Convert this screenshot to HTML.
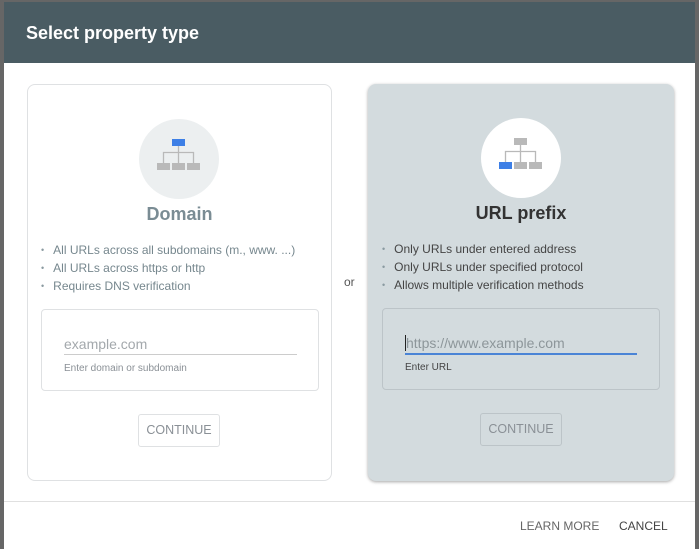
<!DOCTYPE html>
<html><head><style>
*{margin:0;padding:0;box-sizing:border-box}
body{width:699px;height:549px;background:#666;position:relative;overflow:hidden;font-family:"Liberation Sans",sans-serif}
.dlg{position:absolute;left:4px;top:2px;width:691px;height:547px;background:#fff}
.hdr{position:absolute;left:0;top:0;width:691px;height:61px;background:#4a5c63;color:#fff;font-weight:bold;font-size:18px;padding:21px 0 0 22px}
.a{position:absolute}
.card{position:absolute;top:84px;height:397px;border-radius:8px}
.c1{left:27px;width:305px;border:1px solid #dfe1e3;background:#fff}
.c2{left:368px;width:306px;background:#d3dbde;box-shadow:0 1px 3px rgba(0,0,0,.35)}
.circ{position:absolute;width:80px;height:80px;border-radius:50%;top:34px}
.ttl{position:absolute;top:119px;width:100%;text-align:center;font-size:18px;font-weight:bold}
ul{position:absolute;left:13px;top:156px;font-size:12px;line-height:18px;list-style:none}
li:before{content:"•";font-size:9px;margin-right:9px;vertical-align:1px;color:#8a9aa0}
.inp{position:absolute;top:224px;left:13px;width:278px;height:82px;border-radius:4px}
.btn{position:absolute;top:329px;width:82px;height:33px;border-radius:3px;font-size:12.5px;text-align:center;line-height:31px;color:#8a9096}
</style></head><body>
<div class="dlg">
<div class="hdr">Select property type</div>
</div>
<div class="card c1">
 <div class="circ" style="left:111px;background:#eceff0"></div>
 <svg class="a" style="left:0;top:0" width="305" height="120">
  <rect x="144" y="54" width="13" height="7" fill="#3d7fe6"/>
  <path d="M150.5 61v6M135.5 78v-10.5h30v10.5M150.5 67v11" stroke="#b9b9b9" stroke-width="1.3" fill="none"/>
  <rect x="129" y="78" width="13" height="7" fill="#b9b9b9"/>
  <rect x="144" y="78" width="13" height="7" fill="#b9b9b9"/>
  <rect x="159" y="78" width="13" height="7" fill="#b9b9b9"/>
 </svg>
 <div class="ttl" style="color:#7a8c94">Domain</div>
 <ul style="color:#76878e"><li>All URLs across all subdomains (m., www. ...)</li><li>All URLs across https or http</li><li>Requires DNS verification</li></ul>
 <div class="inp" style="border:1px solid #dfe1e3">
  <div class="a" style="left:22px;top:26px;font-size:14px;color:#a3a8ac">example.com</div>
  <div class="a" style="left:22px;top:44px;width:233px;height:1px;background:#ccc"></div>
  <div class="a" style="left:22px;top:53px;font-size:10px;color:#8a9096">Enter domain or subdomain</div>
 </div>
 <div class="btn" style="left:110px;border:1px solid #dfe1e3">CONTINUE</div>
</div>
<div class="a" style="left:344px;top:275px;font-size:12px;color:#555">or</div>
<div class="card c2">
 <div class="circ" style="left:113px;background:#fff"></div>
 <svg class="a" style="left:0;top:0" width="306" height="120">
  <rect x="146" y="54" width="13" height="7" fill="#b9b9b9"/>
  <path d="M152.5 61v6M137.5 78v-10.5h30v10.5M152.5 67v11" stroke="#b9b9b9" stroke-width="1.3" fill="none"/>
  <rect x="131" y="78" width="13" height="7" fill="#3d7fe6"/>
  <rect x="146" y="78" width="13" height="7" fill="#b9b9b9"/>
  <rect x="161" y="78" width="13" height="7" fill="#b9b9b9"/>
 </svg>
 <div class="ttl" style="color:#333">URL prefix</div>
 <ul style="left:14px;color:#444"><li>Only URLs under entered address</li><li>Only URLs under specified protocol</li><li>Allows multiple verification methods</li></ul>
 <div class="inp" style="left:14px;border:1px solid #bcc4c8">
  <div class="a" style="left:22px;top:26px;font-size:14px;color:#8d969a;border-left:1px solid #222;padding-left:0">https://www.example.com</div>
  <div class="a" style="left:22px;top:44px;width:232px;height:2px;background:#4a84d6"></div>
  <div class="a" style="left:22px;top:53px;font-size:10px;color:#444">Enter URL</div>
 </div>
 <div class="btn" style="left:112px;border:1px solid #bcc4c8">CONTINUE</div>
</div>
<div class="a" style="left:4px;top:501px;width:691px;height:1px;background:#e0e0e0"></div>
<div class="a" style="left:520px;top:519px;font-size:12px;color:#666">LEARN MORE</div>
<div class="a" style="left:619px;top:519px;font-size:12px;color:#444">CANCEL</div>
</body></html>
